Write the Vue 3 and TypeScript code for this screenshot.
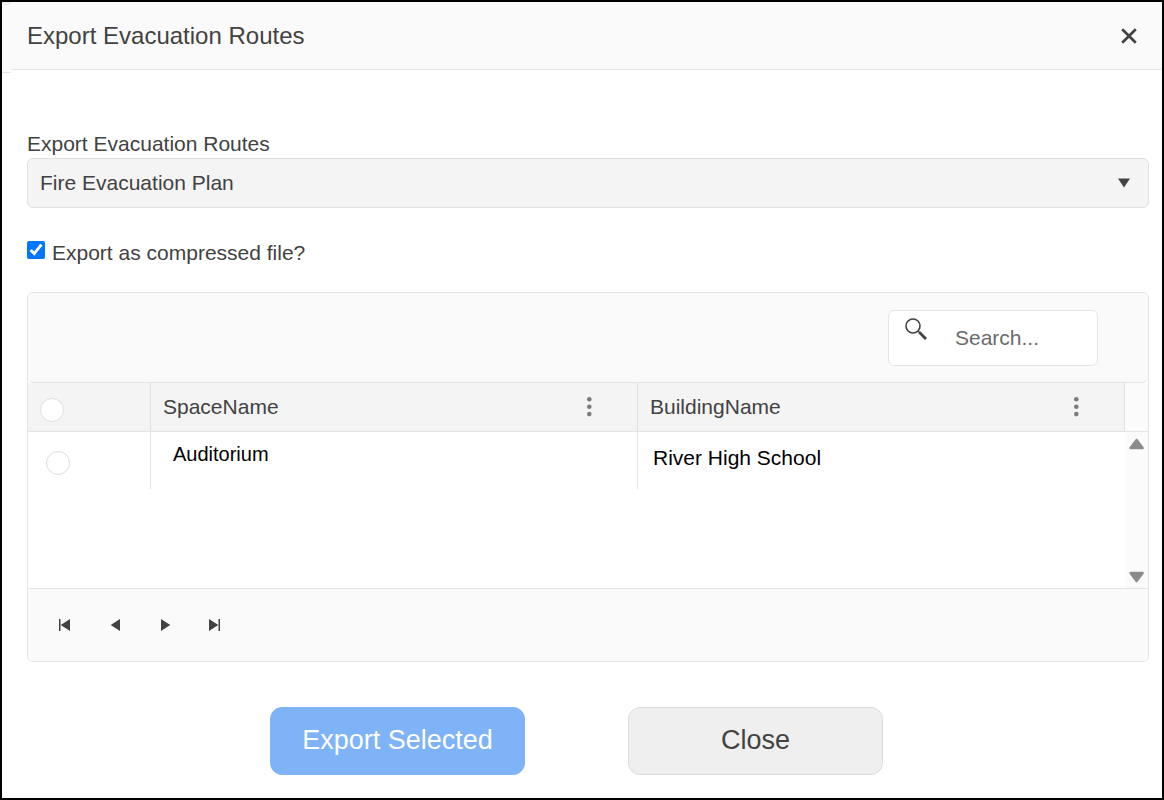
<script setup lang="ts">
import { computed, ref } from 'vue'

interface Space {
  id: number
  spaceName: string
  buildingName: string
}

const plans: string[] = ['Fire Evacuation Plan']
const plan = ref(plans[0])
const compressed = ref(true)
const search = ref('')
const selected = ref<number[]>([])
const spaces: Space[] = [{ id: 1, spaceName: 'Auditorium', buildingName: 'River High School' }]

const rows = computed(() => {
  const term = search.value.trim().toLowerCase()
  return spaces.filter((s) => `${s.spaceName} ${s.buildingName}`.toLowerCase().includes(term))
})

const pagerButtons = [
  { label: 'First page', path: 'M5 4h1.500v12h-1.500zM16 4v12L6.700 10z' },
  { label: 'Previous page', path: 'M16 4v12L6.700 10z' },
  { label: 'Next page', path: 'M7 4v12L16.300 10z' },
  { label: 'Last page', path: 'M5 4v12L14.300 10zM14.500 4h1.500v12h-1.500z' },
]

function toggleAll(event: Event) {
  const checked = (event.target as HTMLInputElement).checked
  selected.value = checked ? rows.value.map((r) => r.id) : []
}
</script>

<template>
  <div class="dialog" role="dialog" aria-labelledby="dialog-title">
    <header class="titlebar">
      <h1 id="dialog-title">Export Evacuation Routes</h1>
      <button class="icon-button" type="button" aria-label="Close dialog">
        <svg width="20" height="20" viewBox="0 0 20 20" fill="none" stroke="#424242" stroke-width="2.700">
          <path d="M3.200 3.200L16.800 16.800M16.800 3.200L3.200 16.800" />
        </svg>
      </button>
    </header>

    <main class="content">
      <label class="field-label" for="plan">Export Evacuation Routes</label>
      <div class="select-wrap">
        <select id="plan" v-model="plan">
          <option v-for="p in plans" :key="p" :value="p">{{ p }}</option>
        </select>
        <svg class="caret" width="12" height="10" viewBox="0 0 12 10" aria-hidden="true">
          <path d="M0 0.500h12L6 9.500z" fill="#424242" />
        </svg>
      </div>

      <div class="check-line">
        <input id="compressed" v-model="compressed" type="checkbox" />
        <label for="compressed">Export as compressed file?</label>
      </div>

      <section class="grid">
        <div class="toolbar">
          <div class="search">
            <svg width="22" height="22" viewBox="0 0 22 22" fill="none" stroke="#424242" aria-hidden="true">
              <circle cx="8" cy="8" r="7" stroke-width="1.600" />
              <path d="M13 13l2 2" stroke-width="1.600" />
              <path d="M14.300 14.300L21 21" stroke-width="2.800" />
            </svg>
            <input v-model="search" type="text" placeholder="Search..." aria-label="Search" />
          </div>
        </div>

        <div class="grid-body">
          <div class="table-area">
            <table>
              <colgroup>
                <col class="col-check" />
                <col />
                <col />
              </colgroup>
              <thead>
                <tr>
                  <th scope="col" class="check-head">
                    <input
                      class="round"
                      type="checkbox"
                      aria-label="Select all rows"
                      :checked="rows.length > 0 && selected.length === rows.length"
                      @change="toggleAll"
                    />
                  </th>
                  <th v-for="name in ['SpaceName', 'BuildingName']" :key="name" scope="col">
                    <div class="head-cell">
                      <span>{{ name }}</span>
                      <button class="icon-button" type="button" :aria-label="`${name} column menu`">
                        <svg width="20" height="20" viewBox="0 0 20 20" fill="#7c7c7c">
                          <circle cx="10.300" cy="2.300" r="2.300" />
                          <circle cx="10.300" cy="9.700" r="2.300" />
                          <circle cx="10.300" cy="17.100" r="2.300" />
                        </svg>
                      </button>
                    </div>
                  </th>
                </tr>
              </thead>
              <tbody>
                <tr v-for="row in rows" :key="row.id">
                  <td class="check-cell">
                    <input
                      v-model="selected"
                      class="round"
                      type="checkbox"
                      :value="row.id"
                      :aria-label="`Select ${row.spaceName}`"
                    />
                  </td>
                  <td class="space-cell">{{ row.spaceName }}</td>
                  <td class="building-cell">{{ row.buildingName }}</td>
                </tr>
              </tbody>
            </table>
          </div>
          <div class="rail">
            <div class="rail-head"></div>
            <div class="rail-track">
              <button class="icon-button" type="button" aria-label="Scroll up">
                <svg width="16" height="12" viewBox="0 0 16 12">
                  <path d="M7.600 2L13.600 10H1.600z" fill="#8b8b8b" stroke="#8b8b8b" stroke-width="2.500" stroke-linejoin="round" />
                </svg>
              </button>
              <button class="icon-button" type="button" aria-label="Scroll down">
                <svg width="16" height="12" viewBox="0 0 16 12">
                  <path d="M7.600 10L13.600 2H1.600z" fill="#8b8b8b" stroke="#8b8b8b" stroke-width="2.500" stroke-linejoin="round" />
                </svg>
              </button>
            </div>
          </div>
        </div>

        <nav class="pager" aria-label="Pages">
          <button v-for="b in pagerButtons" :key="b.label" type="button" :aria-label="b.label">
            <svg width="20" height="20" viewBox="0 0 20 20"><path :d="b.path" fill="#424242" /></svg>
          </button>
        </nav>
      </section>

      <footer class="actions">
        <button class="action primary" type="button">Export Selected</button>
        <button class="action" type="button">Close</button>
      </footer>
    </main>
  </div>
</template>

<style>
body {
  margin: 0;
  background: #fff;
}
</style>

<style scoped>
*,
*::before {
  box-sizing: border-box;
}

.dialog {
  min-height: 100vh;
  border: 2px solid #000;
  background: #fff;
  color: #424242;
  font: 21px/24px "Liberation Sans", Arial, sans-serif;
}

button,
input,
select {
  margin: 0;
  color: inherit;
  font: inherit;
}

svg {
  display: block;
}

.icon-button {
  display: flex;
  padding: 0;
  border: 0;
  background: none;
}

.titlebar {
  position: relative;
  display: flex;
  align-items: center;
  justify-content: space-between;
  height: 68px;
  padding: 0 23px 0 25px;
  border-bottom: 1px solid #e4e4e4;
  background: #fafafa;
}

.titlebar::before {
  content: "";
  position: absolute;
  top: 0;
  left: 0;
  width: 9px;
  height: 71px;
  border-top: 3px solid #f0f0f0;
  border-bottom: 1px solid #e4e4e4;
  background: #fafafa;
}

h1 {
  margin: 0;
  font-size: 24px;
  font-weight: 400;
  line-height: 28px;
}

.content {
  padding: 62px 13px 23px 25px;
}

.field-label {
  display: block;
  margin-bottom: 2px;
}

.select-wrap {
  position: relative;
}

select {
  display: block;
  width: 100%;
  height: 50px;
  padding: 0 40px 0 12px;
  appearance: none;
  border: 1px solid #e0e0e0;
  border-radius: 6px;
  background: #f4f4f4;
}

.caret {
  position: absolute;
  top: 20px;
  right: 19px;
  pointer-events: none;
}

.check-line {
  display: flex;
  gap: 7px;
  margin-top: 33px;
}

.check-line input {
  width: 18px;
  height: 18px;
  accent-color: #0075ff;
}

.grid {
  margin-top: 27px;
  border: 1px solid #e4e4e4;
  border-radius: 6px;
  overflow: hidden;
}

.toolbar {
  display: flex;
  justify-content: flex-end;
  padding: 17px 50px 16px;
  border-bottom: 1px solid #e4e4e4;
  border-radius: 0 0 6px 6px;
  background: #fafafa;
}

.search {
  display: flex;
  align-items: center;
  width: 210px;
  height: 56px;
  padding: 0 16px;
  border: 1px solid #e4e4e4;
  border-radius: 6px;
  background: #fff;
}

.search svg {
  flex: none;
  align-self: flex-start;
  margin-top: 7px;
}

.search input {
  flex: 1;
  min-width: 0;
  margin-left: 28px;
  padding: 0;
  border: 0;
  outline: 0;
  background: none;
}

.search input::placeholder {
  color: #6b6b6b;
  opacity: 1;
}

.grid-body {
  display: flex;
  min-height: 205px;
}

.table-area {
  flex: 1;
  min-width: 0;
}

table {
  width: 100%;
  table-layout: fixed;
  border-collapse: separate;
  border-spacing: 0;
}

.col-check {
  width: 123px;
}

th {
  height: 49px;
  padding: 0 38px 0 12px;
  border-right: 1px solid #e0e0e0;
  border-bottom: 1px solid #e4e4e4;
  background: #f4f4f4;
  font-weight: 400;
  text-align: left;
}

.head-cell {
  display: flex;
  align-items: center;
  justify-content: space-between;
}

td {
  height: 57px;
  padding: 0;
  border-right: 1px solid #e4e4e4;
  color: #000;
  text-align: left;
  vertical-align: top;
}

td:last-child {
  border-right: 0;
}

.round {
  display: block;
  width: 24px;
  height: 24px;
  appearance: none;
  border: 1px solid #dedede;
  border-radius: 50%;
  background: #fff;
}

.round:checked {
  border: 7px solid #0075ff;
}

.check-head {
  padding: 6px 12px 0;
}

.check-cell {
  padding: 19px 18px 0;
}

.space-cell {
  padding: 10px 12px 0 22px;
  font-size: 20px;
}

.building-cell {
  padding: 14px 12px 0 15px;
}

.rail {
  display: flex;
  flex-direction: column;
  width: 23px;
  background: #fbfbfb;
}

.rail-head {
  height: 49px;
  border-bottom: 1px solid #e4e4e4;
}

.rail-track {
  display: flex;
  flex: 1;
  flex-direction: column;
  align-items: center;
  justify-content: space-between;
  padding: 6px 0 5px;
}

.pager {
  display: flex;
  height: 73px;
  padding: 0 11px;
  border-top: 1px solid #e4e4e4;
  background: #fafafa;
}

.pager button {
  display: flex;
  align-items: center;
  justify-content: center;
  width: 50px;
  padding: 0;
  border: 0;
  background: none;
}

.actions {
  display: flex;
  justify-content: center;
  gap: 103px;
  margin-top: 45px;
  padding-right: 23px;
}

.action {
  width: 255px;
  height: 68px;
  padding: 0 12px 2px;
  border: 1px solid #dcdcdc;
  border-radius: 12px;
  background: #efefef;
  font-size: 27px;
}

.primary {
  border-color: #7eb3f8;
  background: #7eb3f8;
  color: #fff;
}
</style>
